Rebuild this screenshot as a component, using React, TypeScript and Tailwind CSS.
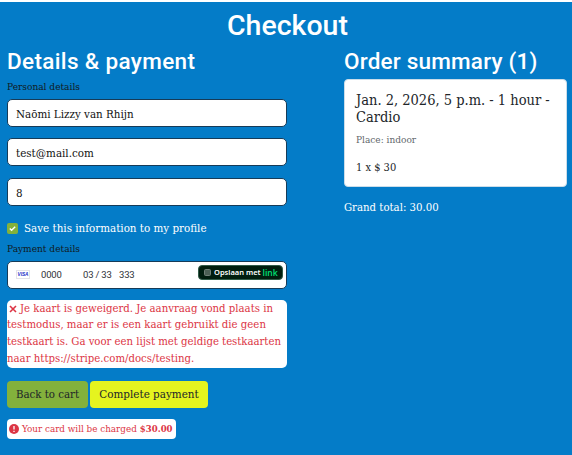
import React from "react";

const serif = "font-['DejaVu_Serif_Condensed','DejaVu_Serif',serif]";
const sans = "font-['Roboto',sans-serif]";

function Field({ value }: { value: string }) {
  return (
    <div className="mb-[11.4px] flex h-[28px] items-center rounded-[5px] border border-[#163b58] bg-white px-2 pt-[3px] text-[11.5px] text-[#111]">
      {value}
    </div>
  );
}

export default function App() {
  return (
    <div className="h-[455px] w-[572px] overflow-hidden bg-white pt-[2px]">
      <main className={`h-[453px] bg-[#047cc8] px-[7px] pt-[6px] text-[#212529] ${serif}`}>
        <h1 className={`h-[40px] pt-px pl-[220px] text-[28.5px] leading-[34px] font-medium text-white ${sans}`}>
          Checkout
        </h1>
        <div className="flex">
          <section className="w-[280px] shrink-0">
            <h2 className={`h-[31px] whitespace-nowrap text-[22.5px] leading-[27px] font-medium tracking-[0.35px] text-white ${sans}`}>
              Details &amp; payment
            </h2>
            <p className="h-[20px] text-[10.05px] leading-[15px] text-[#111a22]">Personal details</p>
            <Field value="Naōmi Lizzy van Rhijn" />
            <Field value="test@mail.com" />
            <Field value="8" />
            <label className="mt-[17px] flex h-[11px] items-center whitespace-nowrap text-[11.5px] text-white">
              <span className="mr-[6px] flex h-[11px] w-[11px] items-center justify-center rounded-[2px] bg-[#83b13c]">
                <svg viewBox="0 0 10 10" className="h-[9px] w-[9px]" fill="none" stroke="white" strokeWidth="1.6">
                  <path d="M2 5l2 2 4-4" />
                </svg>
              </span>
              Save this information to my profile
            </label>
            <p className="mt-[7px] h-[20px] text-[10.05px] leading-[15px] text-[#111a22]">Payment details</p>
            <div className="flex h-[28px] items-start rounded-[5px] border border-[#163b58] bg-white pr-[3px] pl-[8px] font-['Roboto',sans-serif] text-[9.5px] leading-[25px] text-[#303238]">
              <svg viewBox="0 0 14 9" className="mt-[8px] mr-[11px] h-[9px] w-[14px]">
                <rect x=".5" y=".5" width="13" height="8" fill="white" stroke="#e3e3e8" />
                <text x="1.5" y="6.3" fontSize="5" fontWeight="bold" fontStyle="italic" fill="#2030c8" textLength="11" lengthAdjust="spacingAndGlyphs" fontFamily="Liberation Sans">VISA</text>
              </svg>
              <span className="w-[42px] tracking-[-0.2px]">0000</span>
              <span className="w-[36px] whitespace-nowrap tracking-[-0.2px]">03 / 33</span>
              <span className="tracking-[-0.2px]">333</span>
              <span className="mt-[3px] ml-auto flex h-[15px] w-[85px] items-center rounded-[4px] border border-[#315b48] bg-[#011e0f] pl-[5px] font-['Noto_Sans',sans-serif] text-[7.5px] leading-[13px] font-semibold whitespace-nowrap text-white">
                <span className="mr-[3px] h-[7px] w-[7px] shrink-0 rounded-[1.5px] border border-[#718078] bg-[#4c6055]" />
                Opslaan met
                <b className="ml-[2px] text-[8.5px] font-semibold text-[#00d66f]">link</b>
              </span>
            </div>
            <div className="mt-[11px] h-[68px] rounded-[5px] bg-white pt-px text-[11.3px] leading-[16.6px] whitespace-nowrap text-[#dc3545]">
              <div className="flex items-center">
                <svg viewBox="0 0 8 8" className="mr-[3px] ml-[2px] h-[8px] w-[8px]" stroke="#dc3545" strokeWidth="1.6">
                  <path d="M1 1l6 6M7 1L1 7" />
                </svg>
                Je kaart is geweigerd. Je aanvraag vond plaats in
              </div>
              <div>testmodus, maar er is een kaart gebruikt die geen</div>
              <div className="tracking-[-0.03px]">testkaart is. Ga voor een lijst met geldige testkaarten</div>
              <div>naar https://stripe.com/docs/testing.</div>
            </div>
            <div className="mt-[13px] flex gap-[2px] text-[11.55px]">
              <button className="h-[27px] w-[81px] rounded-[4px] bg-[#83b13c] pt-px text-[11.4px] whitespace-nowrap">Back to cart</button>
              <button className="h-[27px] w-[118px] rounded-[4px] bg-[#e5f41f] pt-px whitespace-nowrap">Complete payment</button>
            </div>
            <div className="mt-[11px] flex h-[20px] w-[169px] items-center rounded-[4px] bg-white pt-px pl-[2px] text-[9.8px] whitespace-nowrap text-[#dc3545]">
              <svg viewBox="0 0 10 10" className="mr-[3px] h-[10px] w-[10px]">
                <circle cx="5" cy="5" r="5" fill="#dc3545" />
                <path d="M5 2v3.5M5 6.7v1.2" stroke="white" strokeWidth="1.3" />
              </svg>
              Your card will be charged <b className="ml-[3px] text-[9.5px]">$30.00</b>
            </div>
          </section>
          <section className="ml-[57px] w-[223px] shrink-0">
            <h2 className={`h-[31px] whitespace-nowrap text-[22.5px] leading-[27px] font-medium tracking-[0.2px] text-white ${sans}`}>
              Order summary (1)
            </h2>
            <div className="h-[108px] rounded-[4px] border border-[#cbdde9] bg-white pt-[12px] pl-[11px] whitespace-nowrap">
              <h3 className="text-[14.5px] leading-[17px]">Jan. 2, 2026, 5 p.m. - 1 hour -<br />Cardio</h3>
              <p className="mt-[7px] text-[10px] leading-[14px] text-[#62676c]">Place: indoor</p>
              <p className="mt-[12px] text-[11px] leading-[17px]">1 x $ 30</p>
            </div>
            <p className="mt-[13px] text-[11.3px] leading-[16px] text-white">Grand total: 30.00</p>
          </section>
        </div>
      </main>
    </div>
  );
}
